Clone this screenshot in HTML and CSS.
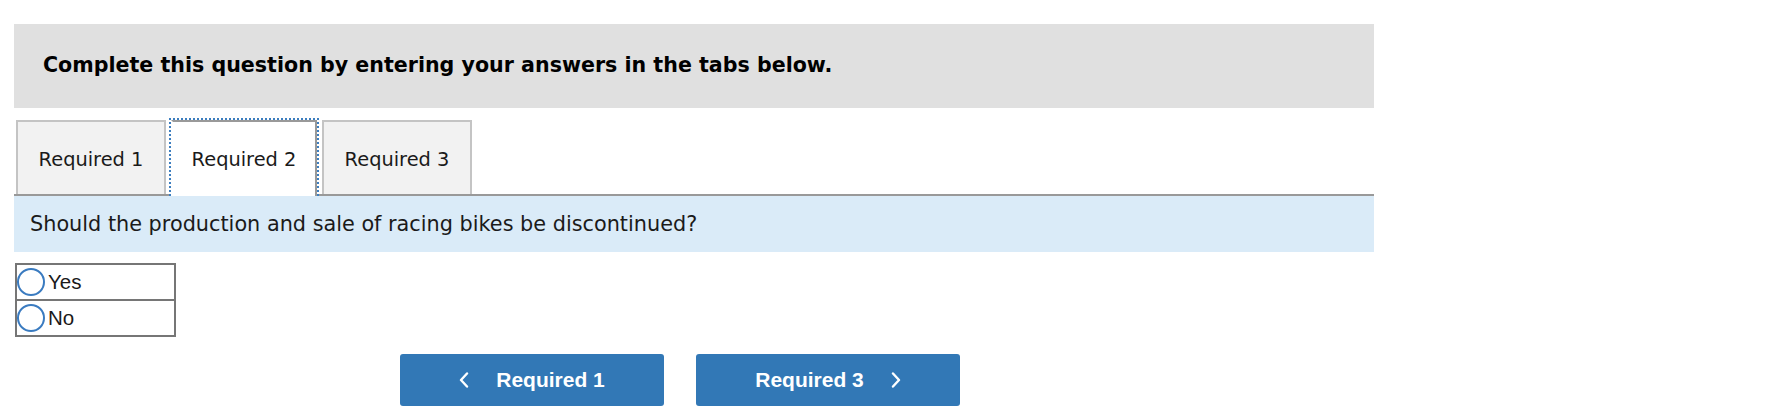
FILE: index.html
```html
<!DOCTYPE html>
<html lang="en">
<head>
<meta charset="utf-8">
<title>Required 2</title>
<link rel="stylesheet" href="styles.css">
</head>
<body>
<div class="page">
  <div class="instructions">Complete this question by entering your answers in the tabs below.</div>

  <div class="tabs">
    <div class="tab">Required 1</div>
    <div class="tab tab-active">Required 2</div>
    <div class="tab">Required 3</div>
  </div>

  <div class="question">Should the production and sale of racing bikes be discontinued?</div>

  <div class="choices">
    <label class="choice"><input type="radio" name="answer" class="radio"><span class="choice-label">Yes</span></label>
    <label class="choice"><input type="radio" name="answer" class="radio"><span class="choice-label">No</span></label>
  </div>

  <div class="nav">
    <button class="nav-btn" type="button">
      <svg class="chev" width="10" height="16" viewBox="0 0 10 16"><path d="M8 1.5 L2 8 L8 14.5" fill="none" stroke="#fff" stroke-width="2.4" stroke-linecap="round" stroke-linejoin="round"/></svg>
      <span>Required 1</span>
    </button>
    <button class="nav-btn" type="button">
      <span>Required 3</span>
      <svg class="chev" width="10" height="16" viewBox="0 0 10 16"><path d="M2 1.5 L8 8 L2 14.5" fill="none" stroke="#fff" stroke-width="2.4" stroke-linecap="round" stroke-linejoin="round"/></svg>
    </button>
  </div>
</div>
</body>
</html>
```

FILE: styles.css
```css
html, body {
  margin: 0;
  padding: 0;
  background: #fff;
}

body {
  font-family: "DejaVu Sans", Verdana, sans-serif;
  color: #1a1a1a;
}

.page {
  width: 1360px;
  margin-left: 14px;
  padding-top: 24px;
}

.instructions {
  background: #e0e0e0;
  height: 84px;
  box-sizing: border-box;
  padding-left: 29px;
  padding-bottom: 2px;
  display: flex;
  align-items: center;
  font-weight: bold;
  font-size: 20.6px;
  color: #000;
}

.tabs {
  display: flex;
  gap: 5px;
  margin-top: 12px;
  padding-left: 2px;
  border-bottom: 2px solid #999;
  height: 74px;
}

.tab {
  box-sizing: border-box;
  height: 74px;
  width: 150px;
  border: 2px solid #c4c4c4;
  border-bottom: none;
  background: #f2f2f2;
  display: flex;
  align-items: center;
  justify-content: center;
  font-size: 19.4px;
  color: #1a1a1a;
  padding-top: 2px;
}

.tab-active {
  width: 146px;
  height: 76px;
  padding-bottom: 2px;
  background: #fff;
  border-color: #999;
  border-left-color: #fff;
  position: relative;
  z-index: 1;
}

.tab-active::before {
  content: "";
  position: absolute;
  top: -4px;
  left: -4px;
  right: -4px;
  bottom: 0;
  border: 2px dotted #3d7ebf;
  border-bottom: none;
  pointer-events: none;
}

.question {
  background: #daebf8;
  height: 56px;
  box-sizing: border-box;
  padding-left: 16px;
  display: flex;
  align-items: center;
  font-size: 20.8px;
  color: #1a1a1a;
}

.choices {
  margin-top: 11px;
  margin-left: 1px;
  width: 161px;
  box-sizing: border-box;
  border: 2px solid #767676;
}

.choice {
  display: flex;
  align-items: center;
  height: 34px;
  font-family: "Liberation Sans", Arial, sans-serif;
  font-size: 20.5px;
  color: #1a1a1a;
}

.choice + .choice {
  border-top: 2px solid #767676;
}

.radio {
  -webkit-appearance: none;
  appearance: none;
  margin: 0 3px 0 0;
  width: 28px;
  height: 28px;
  border: 2.5px solid #3a7bc0;
  border-radius: 50%;
  box-sizing: border-box;
  background: #fff;
}

.nav {
  display: flex;
  gap: 32px;
  margin-top: 17px;
  margin-left: 386px;
}

.nav-btn {
  width: 264px;
  height: 52px;
  border: none;
  border-radius: 3px;
  background: #3278b6;
  color: #fff;
  font-family: "Liberation Sans", Arial, sans-serif;
  font-weight: bold;
  font-size: 21px;
  display: flex;
  align-items: center;
  justify-content: center;
  gap: 27px;
  padding: 0;
  cursor: pointer;
}

.chev {
  display: block;
}
```
